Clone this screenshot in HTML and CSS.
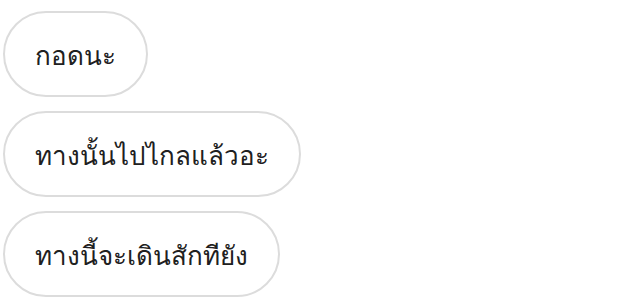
FILE: index.html
```html
<!DOCTYPE html>
<html>
<head>
<title>Chips</title>
<link rel="stylesheet" href="styles.css">
</head>
<body>
<div class="list">
<div class="chip">กอดนะ</div>
<div class="chip">ทางนั้นไปไกลแล้วอะ</div>
<div class="chip">ทางนี้จะเดินสักทียัง</div>
</div>
</body>
</html>
```

FILE: styles.css
```css
body {
margin: 0;
padding: 11px 3px;
background-color: #ffffff;
font-family: "Noto Sans", sans-serif;
}

.list {
display: flex;
flex-direction: column;
align-items: flex-start;
gap: 14px;
}

.chip {
box-sizing: border-box;
height: 86px;
display: flex;
align-items: center;
padding: 2px 30px 0;
border: 2px solid #dcdcdc;
border-radius: 43px;
color: #202020;
font-size: 26px;
}
```
